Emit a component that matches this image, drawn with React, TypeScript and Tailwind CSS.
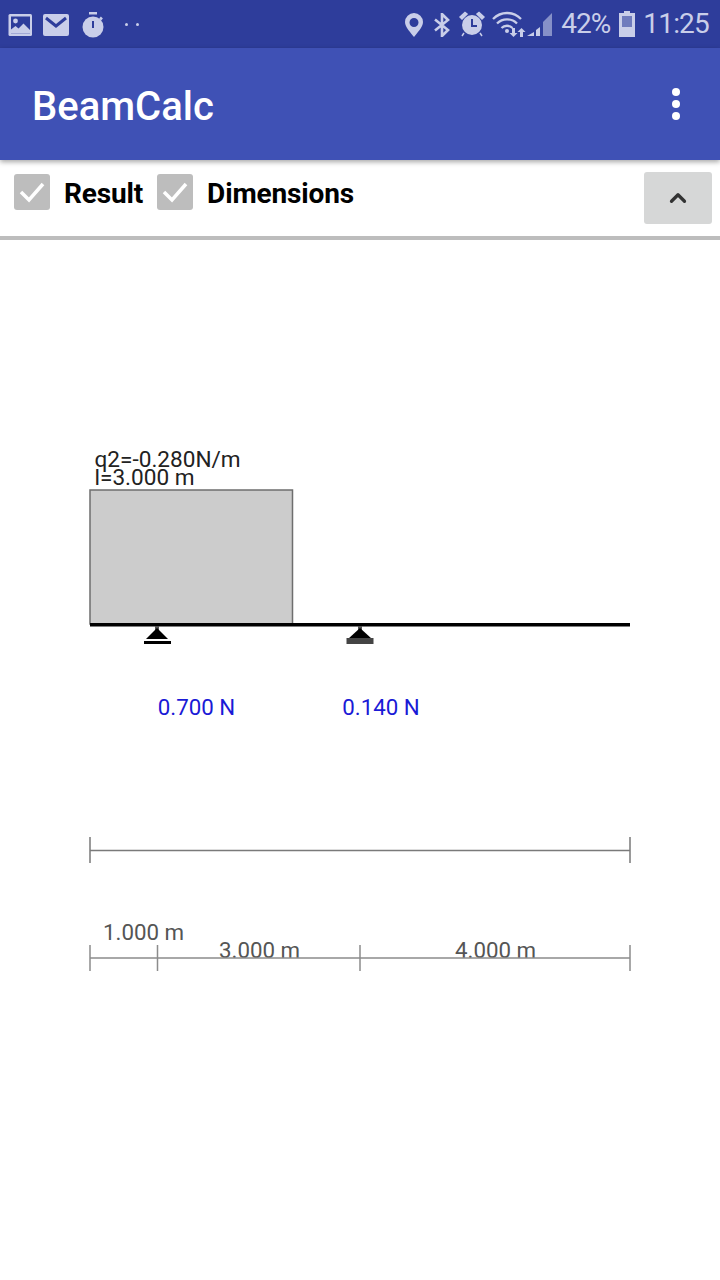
import React from 'react';
import { ChevronUp } from 'lucide-react';

const StatusLeft = () => (
  <div className="flex items-center text-[#c9cee9]">
    {/* picture */}
    <svg width="24" height="24" viewBox="0 0 24 24" className="ml-[8px] mt-[1px]">
      <rect x="0.500" y="1" width="23.500" height="22" rx="1.500" fill="currentColor" />
      <rect x="3" y="3.500" width="19" height="17" fill="#2e3d9b" />
      <circle cx="7.500" cy="8" r="2.400" fill="currentColor" />
      <path d="M3 20.500v-4l4.500-3.500 3 2.500 5-5 6.500 6.500v3.500z" fill="currentColor" />
    </svg>
    {/* mail */}
    <svg width="26" height="23" viewBox="0 0 26 23" className="ml-[11px] mt-[1px]">
      <rect x="0" y="1" width="26" height="22" rx="2" fill="currentColor" />
      <path d="M3 5l10 8 10-8" fill="none" stroke="#2e3d9b" strokeWidth="3" />
    </svg>
    {/* stopwatch */}
    <svg width="22" height="26" viewBox="0 0 22 26" className="ml-[13px] mt-[1px]">
      <rect x="7" y="0" width="8" height="2.500" fill="currentColor" />
      <circle cx="11" cy="15" r="10.500" fill="currentColor" />
      <path d="M18 5.500l2 2" stroke="currentColor" strokeWidth="2.500" />
      <rect x="10" y="9" width="2" height="7" fill="#2e3d9b" />
    </svg>
    <div className="ml-[21px] mt-[1px] flex gap-[8px]">
      <div className="size-[3px] bg-[#c9cee9] rounded-full" />
      <div className="size-[3px] bg-[#c9cee9] rounded-full" />
    </div>
  </div>
);

const StatusRight = () => (
  <div className="flex items-center text-[#c9cee9]">
    {/* location */}
    <svg width="20" height="24" viewBox="0 0 20 24" className="mt-[1px]">
      <path fillRule="evenodd" d="M10 0a9 9 0 0 1 9 9c0 5-6 11-9 15C7 20 1 14 1 9a9 9 0 0 1 9-9zm0 5a4.500 4.500 0 1 0 0 9 4.500 4.500 0 0 0 0-9z" fill="currentColor" />
    </svg>
    {/* bluetooth */}
    <svg width="18" height="24" viewBox="0 0 18 24" className="ml-[9px] mt-[1px]">
      <path d="M2 6.500L15 17l-6 6V1l6 6L2 17.500" fill="none" stroke="currentColor" strokeWidth="2.600" />
    </svg>
    {/* alarm */}
    <svg width="26" height="26" viewBox="0 0 26 26" className="ml-[8px]">
      <circle cx="13" cy="14" r="10" fill="currentColor" />
      <path d="M1 6l5-4.500 2 1.500-5 5zM25 6l-5-4.500-2 1.500 5 5zM5 22l-2 3M21 22l2 3" fill="currentColor" stroke="currentColor" strokeWidth="1.500" />
      <path d="M13 8v7h5" fill="none" stroke="#2e3d9b" strokeWidth="2" />
    </svg>
    {/* wifi and signal */}
    <svg width="60" height="26" viewBox="0 0 60 26" className="ml-[7px]">
      <path d="M1 8c8-8 20-8 28 0M5 12.500c5.500-5.500 14.500-5.500 20 0M9.500 17c3-3 8-3 11 0" fill="none" stroke="currentColor" strokeWidth="2.300" />
      <circle cx="15" cy="20" r="2" fill="currentColor" />
      <path d="M20 17h3v5h2.500l-4 4-4-4H20zM28 26v-5h-2.500l4-4 4 4H31v5z" fill="currentColor" />
      <path d="M35 25h7v-4zM44 25h4V16l-4 3z" fill="currentColor" />
      <path d="M51 25h9V2l-9 9z" fill="#8690c8" />
    </svg>
    <span className="ml-[9px] text-[28px] leading-none tracking-[-1px] font-['Roboto',sans-serif]">42%</span>
    <svg width="16" height="26" viewBox="0 0 16 26" className="ml-[9px]">
      <path d="M5 0h6v2h5v24H0V2h5z" fill="currentColor" />
      <rect x="3" y="5" width="10" height="11" fill="#6f7bbd" />
    </svg>
    <span className="ml-[8px] mr-[11px] text-[28px] leading-none tracking-[-0.8px] font-['Roboto',sans-serif]">11:25</span>
  </div>
);

const Check = ({ label }: { label: string }) => (
  <div className="flex items-center">
    <div className="size-[36px] rounded-[3px] bg-[#bdbdbd] flex items-center justify-center">
      <svg width="28" height="22" viewBox="0 0 28 22">
        <path d="M3 11l8 8L25 3" fill="none" stroke="#fff" strokeWidth="3.500" />
      </svg>
    </div>
    <span className="ml-[14px] mt-[4px] text-[28px] leading-none font-bold text-black tracking-[-0.15px]">{label}</span>
  </div>
);

const BeamDiagram = () => (
  <svg width="720" height="1040" viewBox="0 240 720 1040" className="block" fontFamily="Roboto, sans-serif">
    <text x="94.500" y="467" fontSize="22.600" fill="#222">q2=-0.280N/m</text>
    <text x="94.500" y="485" fontSize="22.600" fill="#222">l=3.000 m</text>
    <rect x="90" y="490" width="202.500" height="134" fill="#cccccc" stroke="#6e6e6e" strokeWidth="1.500" />
    <rect x="90" y="623" width="540" height="3.500" fill="#000" />

    {/* pinned supports */}
    <rect x="155" y="626" width="4" height="4" fill="#555" />
    <path d="M157 628l11 11h-22z" fill="#000" />
    <rect x="144" y="641" width="27" height="3" fill="#000" />
    <rect x="358" y="626" width="4" height="4" fill="#555" />
    <path d="M360 628l12 11h-24z" fill="#000" />
    <rect x="346.500" y="638" width="27" height="6" fill="#444" />

    <text x="196.500" y="715" fontSize="22.300" fill="#1a1ad6" textAnchor="middle">0.700 N</text>
    <text x="381" y="715" fontSize="22.300" fill="#1a1ad6" textAnchor="middle">0.140 N</text>

    {/* total length */}
    <path d="M90 850.500H630M90 837v26M630 837v26" fill="none" strokeWidth="1.500" className="stroke-[#7a7a7a]" />

    {/* spans */}
    <text x="103" y="940" fontSize="22.300" fill="#555">1.000 m</text>
    <text x="219" y="958" fontSize="22.300" fill="#555">3.000 m</text>
    <text x="455" y="958" fontSize="22.300" fill="#555">4.000 m</text>
    <path d="M90 958H630M90 945v26M157.500 945v26M360 945v26M630 945v26" fill="none" strokeWidth="1.500" className="stroke-[#8c8c8c]" />
  </svg>
);

export default function App() {
  return (
    <div className="w-[720px] h-[1280px] bg-white flex flex-col overflow-hidden font-['Roboto',sans-serif]">
      {/* Status bar */}
      <div className="h-[48px] bg-[#2e3d9b] flex items-center justify-between">
        <StatusLeft />
        <StatusRight />
      </div>

      {/* App bar */}
      <div className="relative z-10 h-[112px] bg-[#3f51b5] flex items-center justify-between pl-[32px] pr-[40px] shadow-[0_2px_5px_rgba(0,0,0,0.35)]">
        <h1 className="mt-[6px] text-[40px] leading-none font-medium text-white">BeamCalc</h1>
        <div className="flex flex-col gap-[4px]">
          <div className="size-[8px] rounded-full bg-white" />
          <div className="size-[8px] rounded-full bg-white" />
          <div className="size-[8px] rounded-full bg-white" />
        </div>
      </div>

      {/* Toolbar */}
      <div className="h-[80px] border-b-[4px] border-[#bdbdbd] flex items-start justify-between pl-[14px] pr-[8px]">
        <div className="flex items-center gap-[14px] mt-[14px]">
          <Check label="Result" />
          <Check label="Dimensions" />
        </div>
        <button className="mt-[12px] w-[68px] h-[52px] rounded-[3px] bg-[#d6d7d7] flex items-center justify-center">
          <ChevronUp size={26} strokeWidth={3} color="#333" />
        </button>
      </div>

      <BeamDiagram />
    </div>
  );
}
